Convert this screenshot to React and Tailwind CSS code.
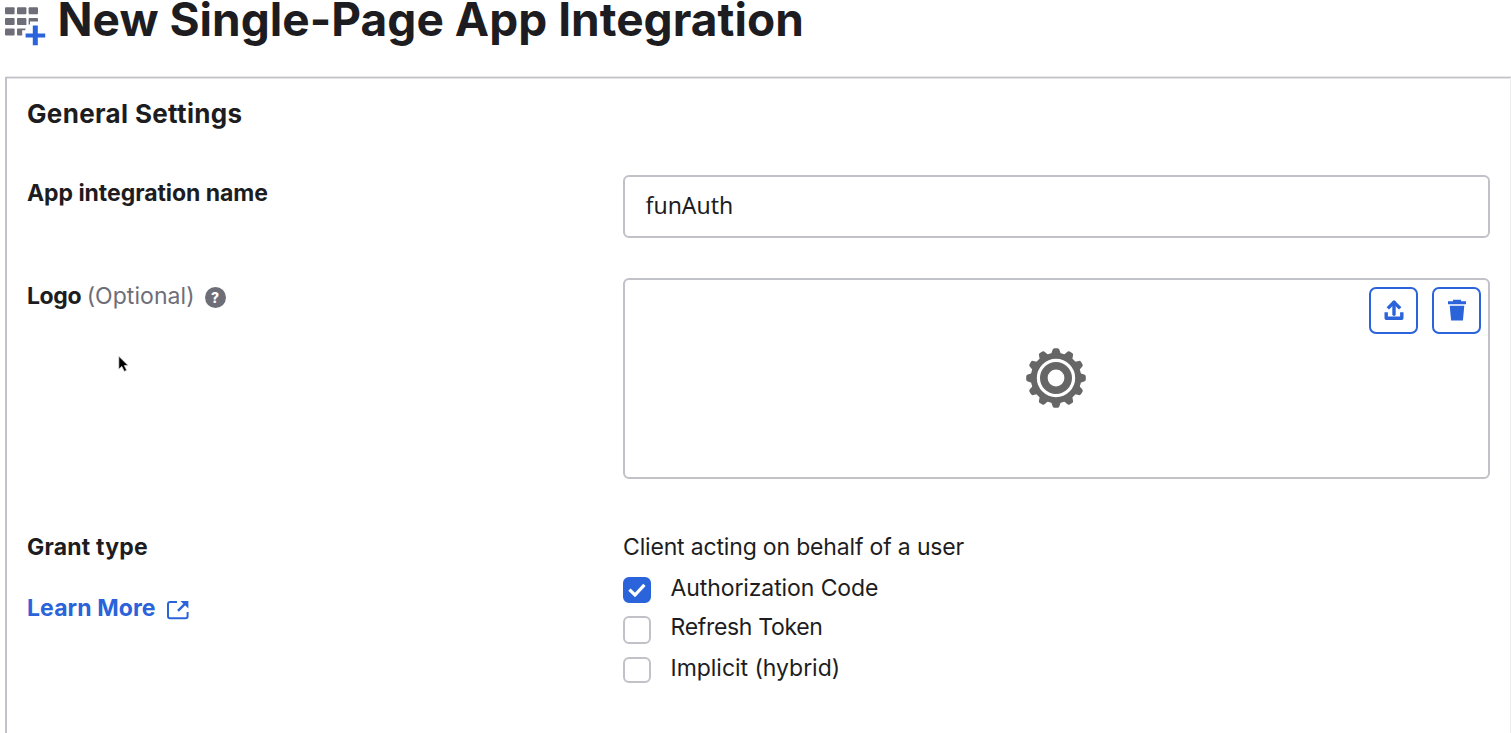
function AppsAddIcon() {
  return (
    <svg className="block h-[40px] w-[42px] shrink-0" viewBox="0 0 42 40" fill="#6e6e78">
      <rect x="0" y="1.2" width="9.6" height="7" rx="1" />
      <rect x="12" y="1.2" width="9.4" height="7" rx="1" />
      <rect x="23.6" y="1.2" width="9.4" height="7" rx="1" />
      <rect x="0" y="12" width="9.6" height="7" rx="1" />
      <path d="M13 12h7.4a1 1 0 0 1 1 1v6H13a1 1 0 0 1-1-1v-5a1 1 0 0 1 1-1z" />
      <path d="M24.6 12H32a1 1 0 0 1 1 1v2.6h-8v2.8h-1.4V13a1 1 0 0 1 1-1z" />
      <rect x="0" y="22.6" width="9.6" height="6.8" rx="1" />
      <path d="M13 22.6h7.4v1.6h-3.2v5.2H13a1 1 0 0 1-1-1v-4.8a1 1 0 0 1 1-1z" />
      <path d="M27.8 19.4h5v8h7.4v4h-7.4v7.8h-5v-7.8h-7.2v-4h7.2z" fill="#2a63da" />
    </svg>
  );
}

function HelpIcon() {
  return (
    <span className="flex size-[21px] items-center justify-center rounded-full bg-[#6e6e78] font-['Inter',sans-serif] text-[14px] leading-[21px] font-extrabold text-white">
      ?
    </span>
  );
}

function GearIcon() {
  const teeth = Array.from({ length: 12 }, (_, i) => i * 30);
  return (
    <svg className="mr-[1px] mb-[2px] h-[60px] w-[60px]" viewBox="-30 -30 60 60">
      <g fill="#666666">
        <circle r="25.3" />
        {teeth.map((a) => (
          <path key={a} d="M-5-23.5 L-3.4-28.2 Q-3-29.8-1.4-29.8 H1.4 Q3-29.8 3.4-28.2 L5-23.5z" transform={`rotate(${a})`} />
        ))}
      </g>
      <circle r="17.6" fill="none" stroke="#fff" strokeWidth="3.2" />
      <circle r="8.4" fill="#fff" />
    </svg>
  );
}

function UploadIcon() {
  return (
    <svg className="mb-[2px] h-[22px] w-[20px]" viewBox="0 0 20 22" fill="none" stroke="#2a63da" strokeWidth="3.4">
      <path d="M10 15.2V3.2" strokeLinecap="round" />
      <path d="M3.8 9.4L10 3.2l6.2 6.2" strokeLinejoin="round" />
      <path d="M2.2 13.2v6.1h15.6v-6.1" strokeLinejoin="round" />
    </svg>
  );
}

function TrashIcon() {
  return (
    <svg className="mb-[2px] h-[22px] w-[18px]" viewBox="0 0 18 22" fill="#2a63da">
      <path d="M5 .8h8v1.4h5v3.1H0V2.2h5z" />
      <path d="M1.7 6.8h14.6L14.9 21.6H3.1z" />
    </svg>
  );
}

function ExternalIcon() {
  return (
    <svg className="h-[20px] w-[22px]" viewBox="0 0 22 20" fill="none" stroke="#2a63da" strokeWidth="2">
      <path d="M10 1.9H3a2 2 0 0 0-2 2v12.4a2 2 0 0 0 2 2h15.6a2 2 0 0 0 2-2v-4.2" />
      <path d="M11 10.8L19.4 2.4" strokeWidth="2.4" />
      <path d="M13.4 .9H21.4V8.6z" fill="#2a63da" stroke="none" />
    </svg>
  );
}

function Check({ checked, children, box, text }) {
  return (
    <label className="flex items-start">
      <span
        className={`flex w-[28px] shrink-0 items-center justify-center rounded-[6px] border-2 ${
          checked ? "border-[#2a63da] bg-[#2a63da]" : "border-[#c1c1c8] bg-white"
        } ${box}`}
      >
        {checked && (
          <svg className="h-[14px] w-[18px] shrink-0" viewBox="0 0 18 14" fill="none" stroke="#fff" strokeWidth="3.2">
            <path d="M1.4 6.6L7 12 16.4 1.8" />
          </svg>
        )}
      </span>
      <span className={`-mt-[2px] ml-[19.5px] text-[23px] leading-[26px] whitespace-nowrap ${text}`}>{children}</span>
    </label>
  );
}

export default function App() {
  return (
    <div className="relative flex h-[733px] w-[1511px] flex-col overflow-hidden bg-white font-['Inter',sans-serif] text-[#1d1d21]">
      <header className="flex h-[77px] shrink-0 items-start pl-[5px]">
        <div className="pt-[6px]">
          <AppsAddIcon />
        </div>
        <h1 className="ml-[10.5px] text-[46px] leading-[39px] font-bold tracking-[0.03px] whitespace-nowrap">
          New Single-Page App Integration
        </h1>
      </header>

      <main className="ml-[5px] h-[700px] w-[1506px] shrink-0 border-t border-r border-l-2 border-t-[#c1c1c8] border-r-[#ededf0] border-l-[#c1c1c8] pl-[20px] shadow-[0_-1px_0_#e9e9ed,inset_0_1px_0_#e3e3e8]">
        <h2 className="pt-[20px] text-[26px] leading-[32px] font-bold tracking-[0.34px]">General Settings</h2>

        <section className="mt-[45px] grid grid-cols-[596px_867px] items-start">
          <span className="mt-[5px] text-[23px] leading-[26px] font-bold tracking-[-0.05px]">App integration name</span>
          <div className="flex h-[63px] items-center rounded-[6px] border-2 border-[#c1c1c8] pl-[20.5px]">
            <span className="mb-[3px] font-['Noto_Sans',sans-serif] text-[23px] leading-[26px]">funAuth</span>
          </div>
        </section>

        <section className="mt-[40px] grid grid-cols-[596px_867px] items-start">
          <div className="mt-[5px] flex items-center text-[23px] leading-[26px]">
            <span className="font-bold tracking-[-0.4px]">Logo</span>
            <span className="ml-[5.5px] tracking-[0.05px] text-[#6e6e78]">(Optional)</span>
            <span className="mt-[2px] ml-[10px]">
              <HelpIcon />
            </span>
          </div>
          <div className="relative flex h-[201px] items-center justify-center rounded-[6px] border-2 border-[#c1c1c8]">
            <GearIcon />
            <div className="absolute top-[7px] right-[7px] flex gap-[14px]">
              <button className="flex h-[47px] w-[49px] items-center justify-center rounded-[7px] border-2 border-[#2a63da]">
                <UploadIcon />
              </button>
              <button className="flex h-[47px] w-[49px] items-center justify-center rounded-[7px] border-2 border-[#2a63da]">
                <TrashIcon />
              </button>
            </div>
          </div>
        </section>

        <section className="mt-[55px] grid grid-cols-[596px_867px] items-start">
          <div>
            <div className="text-[23px] leading-[26px] font-bold tracking-[0.21px]">Grant type</div>
            <a className="mt-[35px] flex items-center text-[23px] leading-[26px] font-bold tracking-[0.1px] text-[#2a63da]">
              Learn More
              <span className="mt-[3px] ml-[11px]">
                <ExternalIcon />
              </span>
            </a>
          </div>
          <div>
            <div className="text-[23px] leading-[26px] tracking-[-0.17px]">Client acting on behalf of a user</div>
            <div className="mt-[17px] flex flex-col gap-[13px]">
              <Check checked box="h-[26px]" text="tracking-[-0.1px]">Authorization Code</Check>
              <Check box="h-[28px]" text="tracking-[-0.32px]">Refresh Token</Check>
              <Check box="h-[26px]" text="tracking-[-0.03px]">Implicit (hybrid)</Check>
            </div>
          </div>
        </section>
      </main>

      <svg className="absolute top-[355px] left-[117px] h-[20px] w-[14px]" viewBox="0 0 14 20">
        <path d="M1.8 1.2V14.2L4.8 11.4L7.3 16.4L9.7 15.2L7.3 10.6H11.2z" fill="#000" stroke="#e8e8e8" strokeWidth="0.7" />
      </svg>
    </div>
  );
}
